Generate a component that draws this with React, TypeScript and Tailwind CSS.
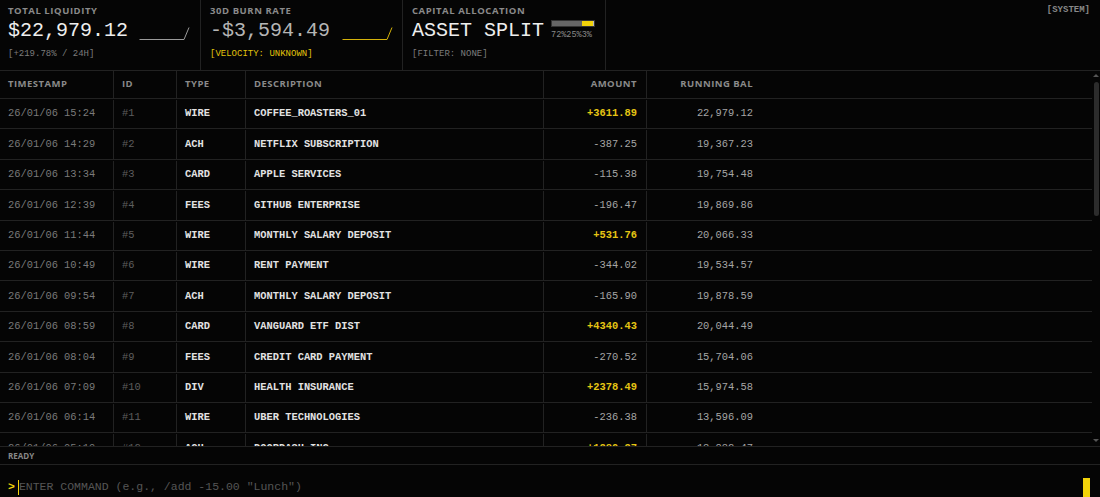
import React from 'react';

const MONO = 'font-["Liberation_Mono","DejaVu_Sans_Mono",monospace]';
const SANS = 'font-["Open_Sans","Liberation_Sans",sans-serif]';

type Txn = {
  ts: string;
  id: string;
  type: string;
  desc: string;
  amount: string;
  bal: string;
};

const rows: Txn[] = [
  { ts: '26/01/06 15:24', id: '#1', type: 'WIRE', desc: 'COFFEE_ROASTERS_01', amount: '+3611.89', bal: '22,979.12' },
  { ts: '26/01/06 14:29', id: '#2', type: 'ACH', desc: 'NETFLIX SUBSCRIPTION', amount: '-387.25', bal: '19,367.23' },
  { ts: '26/01/06 13:34', id: '#3', type: 'CARD', desc: 'APPLE SERVICES', amount: '-115.38', bal: '19,754.48' },
  { ts: '26/01/06 12:39', id: '#4', type: 'FEES', desc: 'GITHUB ENTERPRISE', amount: '-196.47', bal: '19,869.86' },
  { ts: '26/01/06 11:44', id: '#5', type: 'WIRE', desc: 'MONTHLY SALARY DEPOSIT', amount: '+531.76', bal: '20,066.33' },
  { ts: '26/01/06 10:49', id: '#6', type: 'WIRE', desc: 'RENT PAYMENT', amount: '-344.02', bal: '19,534.57' },
  { ts: '26/01/06 09:54', id: '#7', type: 'ACH', desc: 'MONTHLY SALARY DEPOSIT', amount: '-165.90', bal: '19,878.59' },
  { ts: '26/01/06 08:59', id: '#8', type: 'CARD', desc: 'VANGUARD ETF DIST', amount: '+4340.43', bal: '20,044.49' },
  { ts: '26/01/06 08:04', id: '#9', type: 'FEES', desc: 'CREDIT CARD PAYMENT', amount: '-270.52', bal: '15,704.06' },
  { ts: '26/01/06 07:09', id: '#10', type: 'DIV', desc: 'HEALTH INSURANCE', amount: '+2378.49', bal: '15,974.58' },
  { ts: '26/01/06 06:14', id: '#11', type: 'WIRE', desc: 'UBER TECHNOLOGIES', amount: '-236.38', bal: '13,596.09' },
  { ts: '26/01/06 05:19', id: '#12', type: 'ACH', desc: 'DOORDASH INC', amount: '+1280.37', bal: '13,832.47' },
];

const GRID = 'grid grid-cols-[114px_63px_69px_298px_103px_115px_1fr]';

function Spark({ color }: { color: string }) {
  return (
    <svg width="51" height="14" viewBox="0 0 51 14" className="mt-[6px] shrink-0">
      <polyline points="0.5,12.5 45,12.5 50,0.5" fill="none" stroke={color} strokeWidth="1" />
    </svg>
  );
}

function Label({ children }: { children: React.ReactNode }) {
  return (
    <div className={`${SANS} text-[9.5px] font-bold tracking-[0.06em] text-[#8a8a8a] leading-[13px] whitespace-nowrap`}>
      {children}
    </div>
  );
}

export default function App() {
  return (
    <div className="h-[497px] w-full overflow-hidden bg-[#050505] flex flex-col">
      {/* Stats header */}
      <div className="h-[71px] shrink-0 flex border-b border-[#222]">
        <div className="w-[201px] shrink-0 border-r border-[#222] px-[8px] pt-[4px]">
          <Label>TOTAL LIQUIDITY</Label>
          <div className="flex items-center gap-[11px] h-[28px]">
            <span className={`${MONO} text-[20px] text-[#eeeeee] leading-[28px] whitespace-nowrap`}>$22,979.12</span>
            <Spark color="#9a9a9a" />
          </div>
          <div className={`${MONO} text-[9px] text-[#7c7c7c] mt-[3px] leading-[13px]`}>[+219.78% / 24H]</div>
        </div>
        <div className="w-[202px] shrink-0 border-r border-[#222] px-[9px] pt-[4px]">
          <Label>30D BURN RATE</Label>
          <div className="flex items-center gap-[12px] h-[28px]">
            <span className={`${MONO} text-[20px] text-[#b5b5b5] leading-[28px] whitespace-nowrap`}>-$3,594.49</span>
            <Spark color="#d4b20a" />
          </div>
          <div className={`${MONO} text-[9px] text-[#e0c20c] mt-[3px] leading-[13px]`}>[VELOCITY: UNKNOWN]</div>
        </div>
        <div className="w-[203px] shrink-0 border-r border-[#222] px-[9px] pt-[4px]">
          <Label>CAPITAL ALLOCATION</Label>
          <div className="flex items-center gap-[7px] h-[28px]">
            <span className={`${MONO} text-[20px] text-[#eeeeee] leading-[28px] whitespace-nowrap`}>ASSET SPLIT</span>
            <div className="flex flex-col gap-[3px] mt-[-2px] shrink-0">
              <div className="flex w-[44px] h-[7px] border border-[#333]">
                <div className="h-full bg-[#666]" style={{ width: '72%' }} />
                <div className="h-full bg-[#f2d30a]" style={{ width: '25%' }} />
                <div className="h-full bg-[#bbb]" style={{ width: '3%' }} />
              </div>
              <span className={`${MONO} text-[8.5px] text-[#888] leading-[10px] whitespace-nowrap`}>72%25%3%</span>
            </div>
          </div>
          <div className={`${MONO} text-[9px] text-[#7c7c7c] mt-[3px] leading-[13px]`}>[FILTER: NONE]</div>
        </div>
        <div className="flex-1 flex justify-end pr-[10px] pt-[4px]">
          <span className={`${MONO} text-[9px] font-bold text-[#888] leading-[13px]`}>[SYSTEM]</span>
        </div>
      </div>

      {/* Ledger */}
      <div className="h-[375px] shrink-0 flex overflow-hidden">
        <div className="flex-1 overflow-hidden">
          <div className={`${GRID} h-[28px] border-b border-[#222] items-center`}>
            {['TIMESTAMP', 'ID', 'TYPE', 'DESCRIPTION', 'AMOUNT', 'RUNNING BAL', ''].map((h, i) => (
              <div
                key={i}
                className={`${SANS} h-full flex items-center px-[8px] text-[9.5px] font-bold tracking-[0.05em] text-[#8a8a8a] ${
                  i < 5 ? 'border-r border-[#222]' : ''
                } ${i === 4 || i === 5 ? 'justify-end pr-[9px]' : ''}`}
              >
                {h}
              </div>
            ))}
          </div>
          {rows.map((r) => {
            const pos = r.amount.startsWith('+');
            return (
              <div key={r.id} className={`${GRID} ${MONO} h-[30.4px] border-b border-[#222] text-[10.4px] pt-[1px]`}>
                <div className="flex items-center px-[8px] border-r border-[#222] text-[#7a7a7a]">{r.ts}</div>
                <div className="flex items-center px-[8px] border-r border-[#222] text-[#5e5e5e]">{r.id}</div>
                <div className="flex items-center px-[8px] border-r border-[#222] text-[#e2e2e2] font-bold">{r.type}</div>
                <div className="flex items-center px-[8px] border-r border-[#222] text-[#e2e2e2] font-bold">{r.desc}</div>
                <div
                  className={`flex items-center justify-end pr-[9px] border-r border-[#222] ${
                    pos ? 'text-[#e6c514] font-bold' : 'text-[#a5a5a5]'
                  }`}
                >
                  {r.amount}
                </div>
                <div className="flex items-center justify-end pr-[9px] text-[#a5a5a5]">{r.bal}</div>
                <div />
              </div>
            );
          })}
        </div>
        {/* scrollbar */}
        <div className="w-[8px] shrink-0 flex flex-col items-center pt-[3px] pb-[3px]">
          <div className="w-0 h-0 border-l-[3px] border-r-[3px] border-b-[3px] border-l-transparent border-r-transparent border-b-[#555]" />
          <div className="w-[5px] h-[134px] mt-[5px] rounded-full bg-[#2c2c2c]" />
          <div className="flex-1" />
          <div className="w-0 h-0 border-l-[3px] border-r-[3px] border-t-[3px] border-l-transparent border-r-transparent border-t-[#555] mb-[1px]" />
        </div>
      </div>

      {/* Status bar */}
      <div className="h-[19px] shrink-0 border-t border-b border-[#222] flex items-center px-[8px]">
        <span className={`${SANS} text-[8px] font-bold text-[#888]`}>READY</span>
      </div>

      {/* Command line */}
      <div className="flex items-start pt-[13px] px-[8px] pr-[10px]">
        <span className={`${MONO} text-[11.5px] font-bold text-[#f2d30a] leading-[18px]`}>&gt;</span>
        <span className="w-[1px] h-[15px] bg-[#f2d30a] mt-[2px] ml-[3px]" />
        <span className={`${MONO} text-[11.5px] text-[#555] leading-[18px] flex-1`}>
          ENTER COMMAND (e.g., /add -15.00 "Lunch")
        </span>
        <span className="w-[7px] h-[22px] bg-[#f2d30a]" />
      </div>
    </div>
  );
}
